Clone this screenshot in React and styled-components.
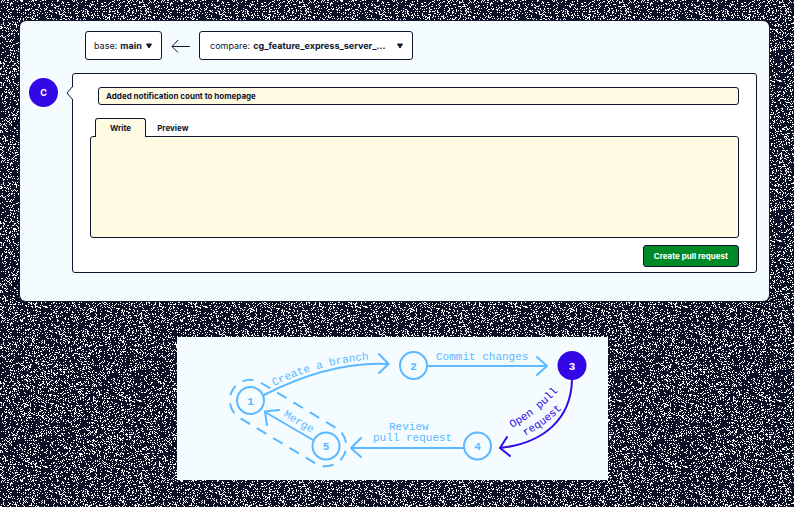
import React from "react";
import styled, { createGlobalStyle } from "styled-components";

const navy = "#10162f";
const violet = "#3307e6";
const sky = "#5cb8ff";
const ice = "#f5fcff";
const cream = "#fffbe3";

// One tile of white specks for the page backdrop.
function speckTile(size, density) {
  let seed = 20231;
  const next = () => {
    seed = (seed * 1103515245 + 12345) % 2147483648;
    return seed / 2147483648;
  };
  let d = "";
  for (let y = 0; y < size; y += 1) {
    for (let x = 0; x < size; x += 1) {
      if (next() < density) d += `M${x} ${y}h1v1h-1z`;
    }
  }
  const svg = `<svg xmlns="http://www.w3.org/2000/svg" width="${size}" height="${size}" shape-rendering="crispEdges"><path fill="#fff" d="${d}"/></svg>`;
  return `url("data:image/svg+xml,${encodeURIComponent(svg)}")`;
}

const specks = speckTile(160, 0.2);

const GlobalStyle = createGlobalStyle`
  * { box-sizing: border-box; }
  body {
    margin: 0;
    background: #0c1024 ${specks};
    color: ${navy};
    font-family: Inter, sans-serif;
  }
  button, input, select, textarea { font: inherit; color: inherit; }
`;

const Page = styled.main`
  display: flex;
  flex-direction: column;
  gap: 36px;
  min-height: 100vh;
  padding: 21px 25px 27px 20px;
`;

const Panel = styled.section`
  padding: 10px 12px 28px 9px;
  background: ${ice};
  border-radius: 6px;
  box-shadow: 0 0 0 1px ${navy};
`;

const BranchBar = styled.div`
  display: flex;
  align-items: center;
  gap: 9px;
  padding-left: 56px;
`;

const BranchField = styled.label`
  display: flex;
  align-items: center;
  gap: 3px;
  width: ${(p) => p.$width};
  height: 29px;
  padding: 0 8px 0 ${(p) => p.$inset};
  background: #fff;
  border: 1px solid ${navy};
  border-radius: 3px;
  font-size: 9px;
`;

const BranchSelect = styled.select`
  flex: 1;
  min-width: 0;
  padding: 0;
  border: 0;
  background: none;
  appearance: none;
  font-weight: 700;
`;

const Composer = styled.div`
  display: flex;
  align-items: flex-start;
  gap: 14px;
  margin-top: 13px;
`;

const Avatar = styled.div`
  display: flex;
  align-items: center;
  justify-content: center;
  width: 29px;
  height: 29px;
  margin-top: 5px;
  border-radius: 50%;
  background: ${violet};
  color: #fff;
  font-size: 9px;
  font-weight: 700;
`;

const Card = styled.form`
  position: relative;
  flex: 1;
  min-width: 0;
  padding: 13px 17px 5px;
  background: #fff;
  border: 1px solid ${navy};
  border-radius: 3px;
`;

const Pointer = styled.svg`
  position: absolute;
  top: 11px;
  left: -7px;
`;

const TitleRow = styled.div`
  padding-left: 8px;
`;

const TitleInput = styled.input`
  display: block;
  width: 100%;
  height: 18px;
  padding: 0 7px;
  background: ${cream};
  border: 1px solid ${navy};
  border-radius: 3px;
  font-size: 8px;
  font-weight: 700;
`;

const Tabs = styled.div`
  display: flex;
  margin-top: 13px;
  padding-left: 5px;
`;

const Tab = styled.button`
  position: relative;
  height: 19px;
  margin-bottom: -1px;
  padding: 0 ${(p) => (p.$active ? "14px" : "10px")};
  background: ${(p) => (p.$active ? cream : "transparent")};
  border: 1px solid ${(p) => (p.$active ? navy : "transparent")};
  border-bottom: 0;
  border-radius: 3px 3px 0 0;
  font-size: 8px;
  font-weight: 700;
`;

const Body = styled.textarea`
  display: block;
  width: 100%;
  height: 102px;
  padding: 8px;
  background: ${cream};
  border: 1px solid ${navy};
  border-radius: 3px;
  font-size: 8px;
  resize: none;
`;

const Actions = styled.div`
  display: flex;
  justify-content: flex-end;
  margin-top: 7px;
`;

const SubmitButton = styled.button`
  height: 22px;
  padding: 0 10px;
  background: #008a27;
  color: #fff;
  border: 1px solid ${navy};
  border-radius: 3px;
  font-size: 8px;
  font-weight: 700;
`;

const FlowArea = styled.div`
  display: flex;
  justify-content: center;
  padding-right: 4px;
`;

const FlowChart = styled.svg`
  display: block;
  width: 100%;
  max-width: 431px;
  background: ${ice};
  font-family: "Liberation Mono", monospace;
  font-size: 11px;
`;

const Line = styled.path`
  fill: none;
  stroke: ${(p) => (p.$active ? violet : sky)};
  stroke-width: 2px;
  stroke-linecap: round;
  stroke-linejoin: round;
`;

const Outline = styled.rect`
  fill: none;
  stroke: ${sky};
  stroke-width: 2px;
  stroke-dasharray: 11 8;
`;

const Label = styled.text`
  fill: ${(p) => (p.$active ? violet : sky)};
`;

const Disc = styled.circle`
  fill: ${(p) => (p.$active ? violet : ice)};
  stroke: ${(p) => (p.$active ? violet : sky)};
  stroke-width: 2px;
`;

const StepNumber = styled.text`
  fill: ${(p) => (p.$active ? "#fff" : sky)};
  font-weight: 700;
  text-anchor: middle;
`;

function Step({ x, y, n, active }) {
  return (
    <g>
      <Disc cx={x} cy={y} r={13.5} $active={active} />
      <StepNumber x={x} y={y + 4} $active={active}>{n}</StepNumber>
    </g>
  );
}

function Caret() {
  return (
    <svg width="8" height="6" viewBox="0 0 8 6" aria-hidden="true">
      <path d="M1.500 1h5L4 5z" fill={navy} stroke={navy} strokeLinejoin="round" />
    </svg>
  );
}

function Workflow() {
  return (
    <FlowChart viewBox="177 337 431 143" role="img" aria-label="Pull request workflow">
      <defs>
        <path id="branch-text" d="M274 386Q318 364 374 359" />
        <path id="open-text" d="M512 428Q539 413 561 388" />
        <path id="request-text" d="M525 436Q546 425 564 407" />
      </defs>
      <Outline
        x="223.5" y="402.5" width="129" height="41" rx="20.5"
        transform="rotate(31 288 423)"
      />
      <Line d="M264 395C305 374 345 362 388 364M379 354L388.500 364L379 373" />
      <Line d="M427 366H547M537 357L547 366L537 375" />
      <Line d="M464 448H352M361 438L351 448L361 457" />
      <Line d="M313 440L265 412M279 410L265 411.500L267 425" />
      <Line $active d="M572 380C571 418 545 443 500 448M507 437L500 448L510 456" />
      <Label><textPath href="#branch-text">Create a branch</textPath></Label>
      <Label x="436" y="360">Commit changes</Label>
      <Label x="389" y="430">Review</Label>
      <Label x="373" y="441">pull request</Label>
      <Label x="283" y="416" transform="rotate(31 283 416)">Merge</Label>
      <Label $active><textPath href="#open-text">Open pull</textPath></Label>
      <Label $active><textPath href="#request-text">request</textPath></Label>
      <Step x={250.5} y={400.5} n="1" />
      <Step x={413.5} y={365.5} n="2" />
      <Step x={572} y={365.5} n="3" active />
      <Step x={477.5} y={446} n="4" />
      <Step x={326} y={446} n="5" />
    </FlowChart>
  );
}

export default function App() {
  return (
    <>
      <GlobalStyle />
      <Page>
        <Panel>
          <BranchBar>
            <BranchField $width="77px" $inset="8px">
              base:
              <BranchSelect defaultValue="main">
                <option>main</option>
              </BranchSelect>
              <Caret />
            </BranchField>
            <svg width="19" height="14" viewBox="0 0 19 14" fill="none" stroke={navy} aria-hidden="true">
              <path d="M19 7.500H1M7 1L1 7.500L7 13.500" />
            </svg>
            <BranchField $width="214px" $inset="10px">
              compare:
              <BranchSelect defaultValue="feature">
                <option value="feature">cg_feature_express_server_...</option>
              </BranchSelect>
              <Caret />
            </BranchField>
          </BranchBar>
          <Composer>
            <Avatar>C</Avatar>
            <Card onSubmit={(e) => e.preventDefault()}>
              <Pointer width="8" height="16" viewBox="0 0 8 16" aria-hidden="true">
                <path d="M7.500 1L1 8L7.500 15" fill="#fff" />
                <path d="M6.500 0V1.500L1 8L6.500 14.500V16" fill="none" stroke={navy} />
                <path d="M7.500 1.500V14.500" stroke="#fff" />
              </Pointer>
              <TitleRow>
                <TitleInput aria-label="Title" defaultValue="Added notification count to homepage" />
              </TitleRow>
              <Tabs role="tablist">
                <Tab type="button" role="tab" aria-selected="true" $active>Write</Tab>
                <Tab type="button" role="tab" aria-selected="false">Preview</Tab>
              </Tabs>
              <Body aria-label="Description" />
              <Actions>
                <SubmitButton>Create pull request</SubmitButton>
              </Actions>
            </Card>
          </Composer>
        </Panel>
        <FlowArea>
          <Workflow />
        </FlowArea>
      </Page>
    </>
  );
}
